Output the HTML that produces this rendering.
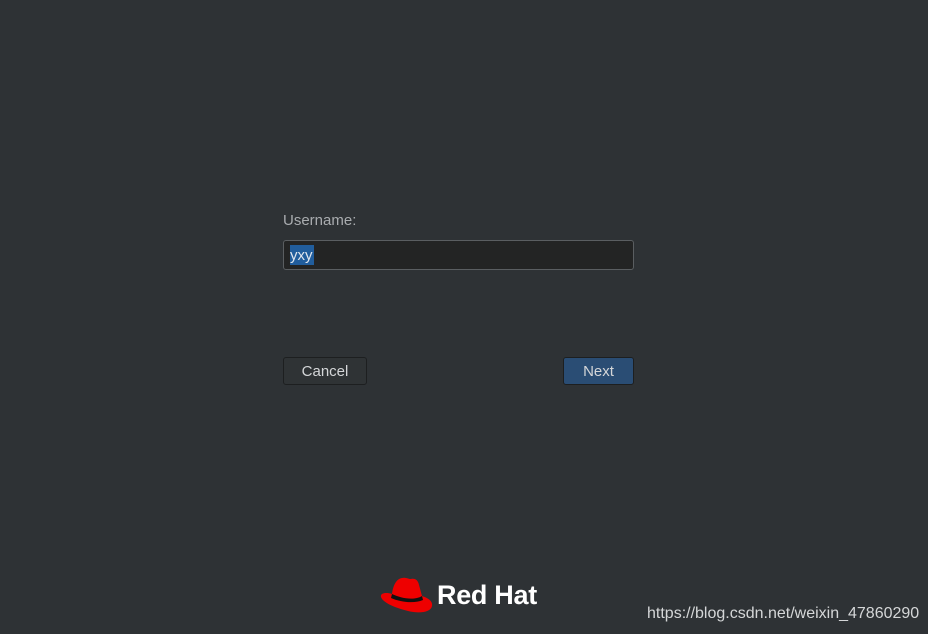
<!DOCTYPE html>
<html><head><style>
body{margin:0;width:928px;height:634px;background:#2e3235;font-family:"Liberation Sans",sans-serif;position:relative;overflow:hidden}
.lbl{position:absolute;left:283px;top:212px;color:#a9acaf;font-size:15px}
.inp{position:absolute;left:283px;top:240px;width:349px;height:28px;background:#232424;border:1px solid #5a5e61;border-radius:3px}
.sel{position:absolute;left:290px;top:245px;width:24px;height:20px;background:#215d9c;color:#e0e6ee;font-size:15px;line-height:21px}
.btn{position:absolute;top:357px;height:26px;border:1px solid #1d1f20;border-radius:3px;color:#d4d6d8;font-size:15px;text-align:center;line-height:28px}
.c{left:283px;width:82px;background:#2f3335}
.n{left:563px;width:69px;background:#2a4d74}
.rh{position:absolute;left:437px;top:580px;color:#fff;font-weight:bold;font-size:27px;letter-spacing:-0.3px}
.wm{position:absolute;left:647px;top:605px;color:#d5d7d8;font-size:16px}
</style></head><body>
<div class="lbl">Username:</div>
<div class="inp"></div>
<div class="sel">yxy</div>
<div class="btn c">Cancel</div>
<div class="btn n">Next</div>
<svg style="position:absolute;left:380px;top:576px" width="56" height="40" viewBox="0 0 56 40">
<path d="M12 18 C13 10 16 3 22 2 C26 1 28 3 31 3 C35 2 38 4 39 9 L42 20 C48 22 53 25 52 30 C51 36 40 38 28 35 C16 32 3 27 1 21 C0 17 6 16 12 18 Z" fill="#e00"/>
<path d="M12 18 C20 22 34 25 42 20 L43 24 C34 28 20 26 11 22 Z" fill="#111"/>
</svg>
<div class="rh">Red Hat</div>
<div class="wm">https://blog.csdn.net/weixin_47860290</div>
</body></html>
